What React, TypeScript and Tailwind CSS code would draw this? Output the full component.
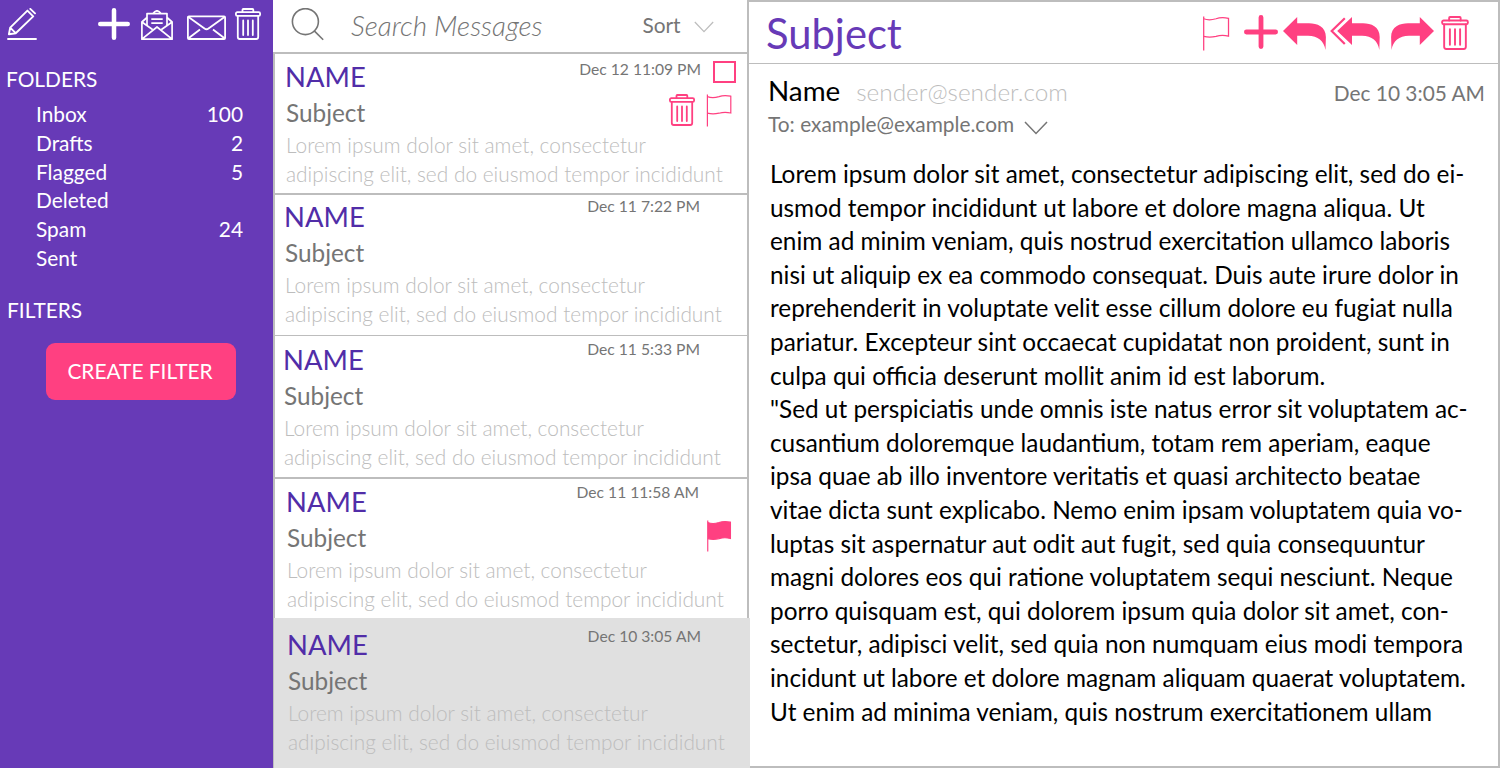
import React from "react";

const T = ({ c, children }: { c: string; children: React.ReactNode }) => (
  <div className={"whitespace-nowrap w-fit " + c}>{children}</div>
);

function Trash({ className }: { className: string }) {
  return (
    <svg viewBox="0 0 26 32" className={className} fill="none" stroke="currentColor" strokeWidth="1.8" strokeLinejoin="round" strokeLinecap="round">
      <path d="M7.5 4.2V1.8Q7.5 1 8.3 1H17.5Q18.3 1 18.3 1.8V4.2" />
      <rect x="0.9" y="4.2" width="24.2" height="3.6" rx="1.4" />
      <path d="M2.8 8V29Q2.8 31 4.8 31H21.2Q23.2 31 23.2 29V8M8.2 12.5V27M13 12.5V27M17.8 12.5V27" />
    </svg>
  );
}

function Flag({ className, filled = false }: { className: string; filled?: boolean }) {
  return (
    <svg viewBox="0 0 26 33" className={className} fill="none" stroke="currentColor" strokeWidth="1.2">
      <path d="M1.4 0.5V32.5" />
      <path d="M1.4 2.6C5 4 9 3.8 13 2.6C17 1.2 20 1.2 24.8 2.2V19C20 17.8 17 18 13 19.2C9 20.2 5 20.2 1.4 19.2" fill={filled ? "currentColor" : "none"} />
    </svg>
  );
}

function Plus({ className }: { className: string }) {
  return (
    <svg viewBox="0 0 34 34" className={className} stroke="currentColor" strokeWidth="4.8" strokeLinecap="round">
      <path d="M17 2.4V31.6M2.4 17H31.6" />
    </svg>
  );
}

function Chevron({ className }: { className: string }) {
  return (
    <svg viewBox="0 0 24 14" className={className} fill="none" stroke="currentColor" strokeWidth="1.5">
      <path d="M1 1L12 12.5L23 1" />
    </svg>
  );
}

function Reply({ className }: { className: string }) {
  return (
    <svg viewBox="0 0 43 33" className={className} fill="currentColor">
      <path d="M0 14L14.2 0V6.2H26C34 6.2 42.9 9.5 42.9 20L42.5 33C41 24 35 18.7 25 18.7H14.2V28Z" />
    </svg>
  );
}

function ReplyAll({ className }: { className: string }) {
  return (
    <svg viewBox="0 0 50 33" className={className} fill="currentColor">
      <path d="M7.2 14L22 0V6.2H33C41 6.2 49.7 9.5 49.7 20L49.3 33C48 24 42 18.7 32 18.7H22V28Z" />
      <path d="M14.8 1.2L1.7 14L14.8 27" fill="none" stroke="currentColor" strokeWidth="2.2" />
    </svg>
  );
}

const folders: [string, string][] = [
  ["Inbox", "100"],
  ["Drafts", "2"],
  ["Flagged", "5"],
  ["Deleted", ""],
  ["Spam", "24"],
  ["Sent", ""],
];

function Sidebar() {
  return (
    <aside className="flex w-[273px] shrink-0 flex-col bg-[#673ab7] text-white">
      <div className="flex h-[64px] shrink-0 items-start pl-[7px]">
        <svg viewBox="0 0 30 33" className="mt-[8px] h-[33px] w-[30px]" fill="none" stroke="currentColor" strokeWidth="1.9" strokeLinejoin="round" strokeLinecap="round">
          <path d="M1 31H29" />
          <path d="M1.9 26.3L3.2 19.6L20.4 2.6L26.2 8.4L8.7 25.2ZM3.2 19.6L8.7 25.2M23.3 0.9L28 5.4" />
        </svg>
        <Plus className="ml-[61px] mt-[8px] h-[32px] w-[32px]" />
        <svg viewBox="0 0 32 31" className="ml-[11px] mt-[10px] h-[31px] w-[32px]" fill="none" stroke="currentColor" strokeWidth="1.7" strokeLinejoin="round">
          <path d="M6 7.5L0.9 12V29.2H31.1V12L26 7.5M0.9 12L11.5 19.5M31.1 12L20.5 19.5M0.9 29.2L16 17L31.1 29.2" />
          <path d="M6 15.5V3.6H26V15.5M12 3.6Q16 -2 20 3.6M10.3 9.2H21.7M10.3 13.2H21.7" />
        </svg>
        <svg viewBox="0 0 39 25" className="ml-[14px] mt-[15px] h-[25px] w-[39px]" fill="none" stroke="currentColor" strokeWidth="1.8" strokeLinejoin="round">
          <rect x="0.9" y="1.4" width="37.2" height="22.6" rx="1" />
          <path d="M1.5 2L17.5 13.5Q19.5 15 21.5 13.5L37.5 2M1.5 23.2L13 14.5M37.5 23.2L26 14.5" />
        </svg>
        <Trash className="ml-[9px] mt-[8px] h-[32px] w-[26px]" />
      </div>
      <T c="ml-[6px] mt-[3px] text-[20.87px] leading-[24px]">FOLDERS</T>
      <ul className="mt-[9px] pl-[36px] pr-[30px] text-[20.87px] leading-[28.8px]">
        {folders.map(([name, count]) => (
          <li key={name} className="flex justify-between">
            <span>{name}</span>
            <span>{count}</span>
          </li>
        ))}
      </ul>
      <T c="ml-[7px] mt-[25px] text-[20.87px] leading-[24px]">FILTERS</T>
      <button className="ml-[46px] mt-[21px] h-[57px] w-[190px] rounded-[9px] bg-[#ff4081] pb-[2px] pr-[2px] text-[20.87px]">CREATE FILTER</button>
    </aside>
  );
}

type Row = { date: string; box: string; pad: string; dateBox: string; extra?: string };

const rows: Row[] = [
  { date: "Dec 12 11:09 PM", box: "h-[141px] border-t-2 pt-[7px]", pad: "pl-[11px]", dateBox: "mr-[46px] -mt-[1px]", extra: "open" },
  { date: "Dec 11 7:22 PM", box: "h-[142px] border-t-2 pt-[6px]", pad: "pl-[10px]", dateBox: "mr-[47px] -mt-[4px]" },
  { date: "Dec 11 5:33 PM", box: "h-[142px] border-t pt-[8px]", pad: "pl-[9px]", dateBox: "mr-[47px] -mt-[4px]" },
  { date: "Dec 11 11:58 AM", box: "h-[141px] border-t-2 pt-[7px]", pad: "pl-[12px]", dateBox: "mr-[48px] -mt-[3px]", extra: "flag" },
  { date: "Dec 10 3:05 AM", box: "z-10 -mr-px flex-1 border-l bg-[#e0e0e0] pt-[11px]", pad: "pl-[14px]", dateBox: "mr-[49px] -mt-[2px]" },
];

function Message({ row }: { row: Row }) {
  return (
    <article className={"relative shrink-0 border-[#bdbdbd] " + row.box}>
      <div className="flex justify-between">
        <div className={row.pad}>
          <T c="-ml-px text-[27.4px] leading-[32px] text-[#512da8]">NAME</T>
          <T c="mt-[5px] text-[24.35px] leading-[30px] text-[#757575]">Subject</T>
        </div>
        <T c={"text-[15.65px] leading-[18px] text-[#757575] " + row.dateBox}>{row.date}</T>
      </div>
      <div className={"mt-[3px] text-[20.87px] font-light leading-[28.8px] text-[#bdbdbd] " + row.pad}>
        <T c="">Lorem ipsum dolor sit amet, consectetur</T>
        <T c="">adipiscing elit, sed do eiusmod tempor incididunt</T>
      </div>
      {row.extra === "open" && (
        <>
          <div className="absolute right-[11px] top-[7px] h-[22px] w-[23px] border-2 border-[#ff4081]" />
          <div className="absolute right-[15px] top-[40px] flex gap-[11px] text-[#ff4081]">
            <Trash className="h-[32px] w-[26px]" />
            <Flag className="h-[33px] w-[26px]" />
          </div>
        </>
      )}
      {row.extra === "flag" && <Flag filled className="absolute right-[15px] top-[41px] h-[32px] w-[26px] text-[#ff4081]" />}
    </article>
  );
}

function MessageList() {
  return (
    <section className="flex w-[476px] shrink-0 flex-col">
      <div className="flex h-[52px] shrink-0 items-start border-r-2 border-[#bdbdbd]">
        <svg viewBox="0 0 33 33" className="ml-[18px] mt-[8px] h-[33px] w-[33px]" fill="none" stroke="#757575" strokeWidth="1.6">
          <circle cx="14.4" cy="13.6" r="13" />
          <path d="M23 22.6L32.2 31.8" />
        </svg>
        <T c="ml-[27px] mt-[9px] text-[27.83px] font-light italic leading-[33px] text-[#757575]">Search Messages</T>
        <T c="ml-[100px] mt-[13px] text-[20.87px] leading-[24px] text-[#757575]">Sort</T>
        <Chevron className="ml-[13px] mt-[21px] h-[12px] w-[20px] text-[#bdbdbd]" />
      </div>
      <div className="flex h-[566px] shrink-0 flex-col border-x-2 border-[#bdbdbd]">
        {rows.slice(0, 4).map((row) => (
          <Message key={row.date} row={row} />
        ))}
      </div>
      <Message row={rows[4]} />
    </section>
  );
}

const body = [
  "Lorem ipsum dolor sit amet, consectetur adipiscing elit, sed do ei-",
  "usmod tempor incididunt ut labore et dolore magna aliqua. Ut",
  "enim ad minim veniam, quis nostrud exercitation ullamco laboris",
  "nisi ut aliquip ex ea commodo consequat. Duis aute irure dolor in",
  "reprehenderit in voluptate velit esse cillum dolore eu fugiat nulla",
  "pariatur. Excepteur sint occaecat cupidatat non proident, sunt in",
  "culpa qui officia deserunt mollit anim id est laborum.",
  "\"Sed ut perspiciatis unde omnis iste natus error sit voluptatem ac-",
  "cusantium doloremque laudantium, totam rem aperiam, eaque",
  "ipsa quae ab illo inventore veritatis et quasi architecto beatae",
  "vitae dicta sunt explicabo. Nemo enim ipsam voluptatem quia vo-",
  "luptas sit aspernatur aut odit aut fugit, sed quia consequuntur",
  "magni dolores eos qui ratione voluptatem sequi nesciunt. Neque",
  "porro quisquam est, qui dolorem ipsum quia dolor sit amet, con-",
  "sectetur, adipisci velit, sed quia non numquam eius modi tempora",
  "incidunt ut labore et dolore magnam aliquam quaerat voluptatem.",
  "Ut enim ad minima veniam, quis nostrum exercitationem ullam",
];

function Reader() {
  return (
    <main className="flex min-w-0 flex-1 flex-col border-y-2 border-r-2 border-[#bdbdbd]">
      <header className="flex h-[62px] shrink-0 items-start border-b border-[#bdbdbd]">
        <T c="ml-[17px] mt-[7px] text-[41.74px] leading-[48px] text-[#673ab7]">Subject</T>
        <div className="ml-auto mr-[29px] mt-[13px] flex items-start text-[#ff4081]">
          <Flag className="mt-[1px] h-[35px] w-[28px]" />
          <Plus className="ml-[14px] h-[34px] w-[34px]" />
          <Reply className="ml-[5px] mt-[2px] h-[33px] w-[43px]" />
          <ReplyAll className="ml-[4px] mt-[2px] h-[33px] w-[50px]" />
          <Reply className="ml-[11px] mt-[2px] h-[33px] w-[43px] -scale-x-100" />
          <Trash className="ml-[7px] mt-[1px] h-[34px] w-[28px]" />
        </div>
      </header>
      <div className="flex items-baseline pl-[19px] pr-[13px] pt-[10px]">
        <T c="text-[27.83px] leading-[34px] text-black">Name</T>
        <T c="ml-[16px] text-[24.35px] font-light leading-[30px] text-[#bdbdbd]">sender@sender.com</T>
        <T c="ml-auto text-[20.87px] leading-[24px] text-[#757575]">Dec 10 3:05 AM</T>
      </div>
      <div className="flex pl-[19px] pt-[3px] text-[#757575]">
        <T c="text-[20.87px] leading-[26px]">To: example@example.com</T>
        <Chevron className="ml-[10px] mt-[10px] h-[14px] w-[24px]" />
      </div>
      <div className="pl-[21px] pt-[20px] text-[24.35px] leading-[33.6px] text-black">
        {body.map((line) => (
          <T key={line} c="">{line}</T>
        ))}
      </div>
    </main>
  );
}

export default function App() {
  return (
    <div className="flex h-[768px] w-[1500px] overflow-hidden bg-white font-['Lato','Open_Sans',sans-serif]">
      <Sidebar />
      <MessageList />
      <Reader />
    </div>
  );
}
